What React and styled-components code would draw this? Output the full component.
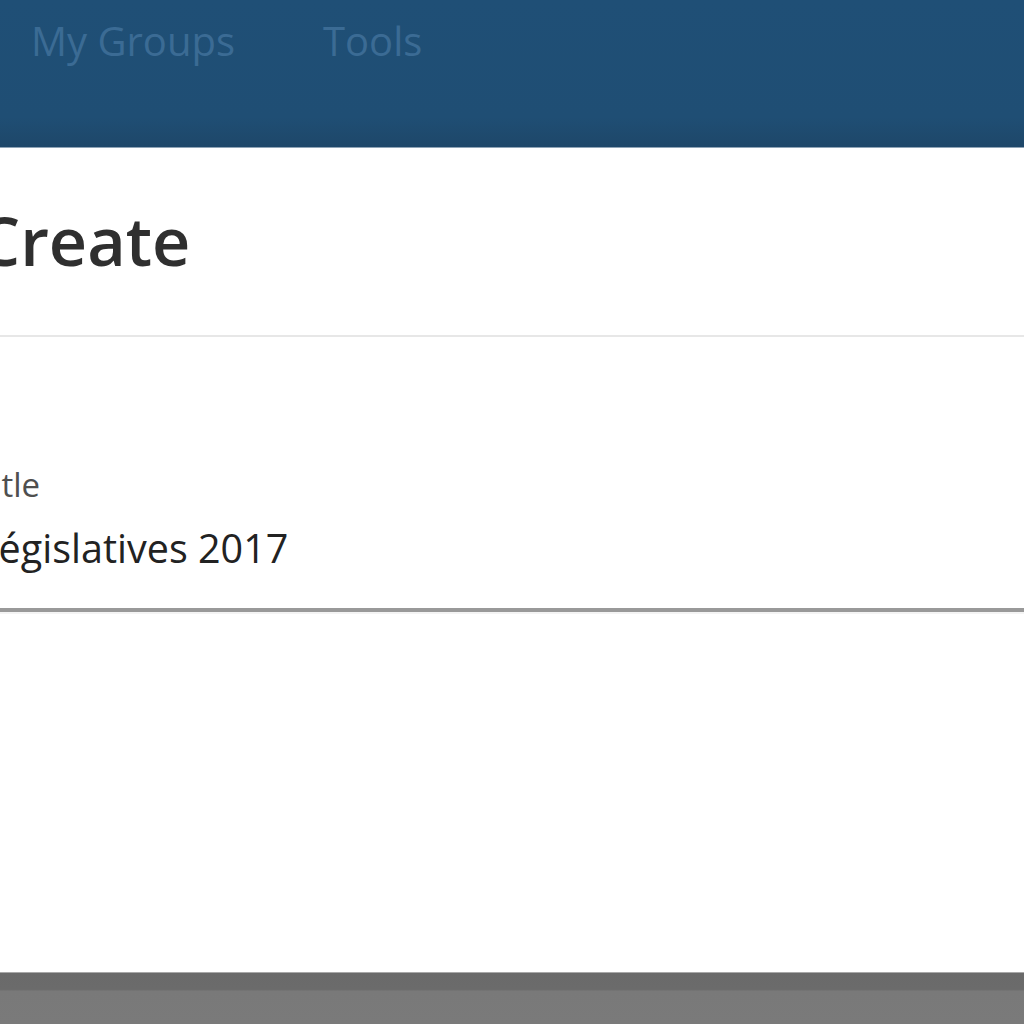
import React from "react";
import styled, {createGlobalStyle} from "styled-components";

const GlobalStyle = createGlobalStyle`
    html, body {
        margin: 0;
        padding: 0;
        background: #ffffff;
        overflow: hidden;
    }
    body {
        font-family: "Open Sans", "Noto Sans", sans-serif;
    }
`;

const Page = styled.div`
    display: flex;
    flex-direction: column;
    width: 1024px;
    height: 1024px;
    overflow: hidden;
`;

const NavBar = styled.header`
    display: flex;
    align-items: flex-start;
    gap: 88px;
    height: 148px;
    box-sizing: border-box;
    padding: 12px 0 0 31px;
    background: linear-gradient(
        to bottom,
        #1f4f76 0%,
        #1f4e74 80%,
        #1e4769 100%
    );
    border-bottom: 1px solid #8ea3b6;
`;

const NavItem = styled.a`
    font-size: 40px;
    line-height: 57px;
    color: #3b6b94;
    text-decoration: none;
    white-space: nowrap;
`;

const Main = styled.main`
    flex: 1;
    display: flex;
    flex-direction: column;
    background: #ffffff;
    margin-left: -25px;
`;

const Heading = styled.h1`
    margin: 59px 0 0 3px;
    font-size: 66.5px;
    line-height: 1;
    font-weight: 600;
    color: #2f2f2f;
`;

const Divider = styled.hr`
    margin: 61px 0 0 -10px;
    border: 0;
    height: 2px;
    background: #e7e7e7;
`;

const Field = styled.div`
    display: flex;
    flex-direction: column;
    margin-top: 131px;
`;

const Label = styled.label`
    font-size: 33px;
    line-height: 1;
    color: #4f4f4f;
    margin-left: 0;
`;

const Value = styled.div`
    margin-top: 28px;
    padding: 0 0 40px 3px;
    font-size: 39.5px;
    line-height: 1;
    color: #222222;
    border-bottom: 4px solid #999999;
    box-shadow: 0 2px 0 #f4f4f4;
`;

const Footer = styled.footer`
    height: 51px;
    border-top: 1px solid #a8a8a8;
    background: linear-gradient(
        to bottom,
        #6a6a6a 0%,
        #6b6b6b 32%,
        #797979 36%,
        #7a7a7a 100%
    );
`;

export default function App() {
    return (
        <Page>
            <GlobalStyle />
            <NavBar>
                <NavItem>My Groups</NavItem>
                <NavItem>Tools</NavItem>
            </NavBar>
            <Main>
                <Heading>Create</Heading>
                <Divider />
                <Field>
                    <Label>Title</Label>
                    <Value>Législatives 2017</Value>
                </Field>
            </Main>
            <Footer />
        </Page>
    );
}
